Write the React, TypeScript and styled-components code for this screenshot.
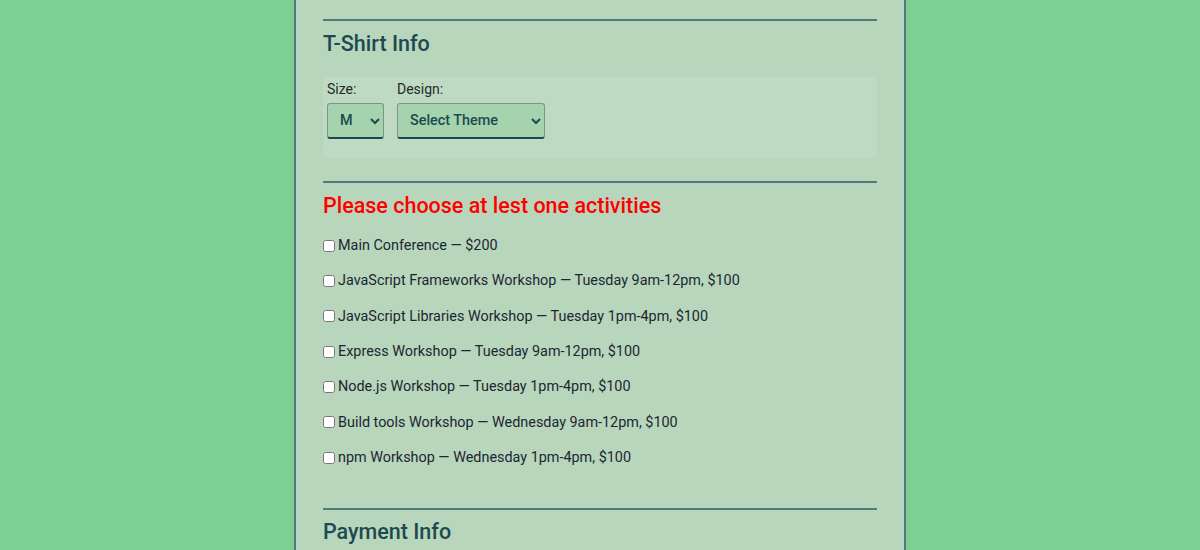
import styled, { createGlobalStyle } from 'styled-components';

const GlobalStyle = createGlobalStyle`
  html, body {
    margin: 0;
    padding: 0;
    background: #7ecf94;
    font-family: Roboto, "Liberation Sans", Arial, sans-serif;
  }
`;

const activities = [
  'Main Conference — $200',
  'JavaScript Frameworks Workshop — Tuesday 9am-12pm, $100',
  'JavaScript Libraries Workshop — Tuesday 1pm-4pm, $100',
  'Express Workshop — Tuesday 9am-12pm, $100',
  'Node.js Workshop — Tuesday 1pm-4pm, $100',
  'Build tools Workshop — Wednesday 9am-12pm, $100',
  'npm Workshop — Wednesday 1pm-4pm, $100',
];

const App = () => {
  return (
    <>
      <GlobalStyle />
      <Page>
        <Form>
          <Section>
            <Title>T-Shirt Info</Title>
            <ShirtBox>
              <Field>
                <Label htmlFor="size">Size:</Label>
                <Select id="size" width={57} defaultValue="M">
                  <option>S</option>
                  <option>M</option>
                  <option>L</option>
                  <option>XL</option>
                </Select>
              </Field>
              <Field>
                <Label htmlFor="design">Design:</Label>
                <Select id="design" width={148} defaultValue="Select Theme">
                  <option>Select Theme</option>
                  <option>JS Puns</option>
                  <option>I ♥ JS</option>
                </Select>
              </Field>
            </ShirtBox>
          </Section>

          <Section>
            <Title error>Please choose at lest one activities</Title>
            <ActivityList>
              {activities.map((a) => (
                <Activity key={a}>
                  <Check type="checkbox" />
                  {a}
                </Activity>
              ))}
            </ActivityList>
          </Section>

          <Section>
            <Title>Payment Info</Title>
          </Section>
        </Form>
      </Page>
    </>
  );
};

export default App;

const Page = styled.div`
  height: 550px;
  overflow: hidden;
  display: flex;
  justify-content: center;
`;

const Form = styled.form`
  width: 612px;
  box-sizing: border-box;
  background: #b8d6bc;
  border-left: 2px solid #4f7b7d;
  border-right: 2px solid #4f7b7d;
  padding: 19px 27px 0;
`;

const Section = styled.section`
  border-top: 2px solid #4f7b7d;
  padding-bottom: 23px;

  & + & {
    padding-bottom: 0;
  }
`;

const Title = styled.h2<{ error?: boolean }>`
  margin: 9.5px 0 0;
  font-size: 21.5px;
  font-weight: 500;
  line-height: 26px;
  color: ${({ error }) => (error ? '#ff0000' : '#1d4a50')};
`;

const ShirtBox = styled.div`
  margin-top: 20.5px;
  background: #bfdac3;
  border-radius: 3px;
  padding: 4px 4px 19px;
  display: flex;
  gap: 13px;
`;

const Field = styled.div`
  display: flex;
  flex-direction: column;
  align-items: flex-start;
`;

const Label = styled.label`
  font-size: 14px;
  line-height: 16px;
  color: #1f2a2c;
  margin-bottom: 6px;
`;

const Select = styled.select<{ width: number }>`
  width: ${({ width }) => width}px;
  height: 36px;
  box-sizing: border-box;
  background-color: #a4d3ae;
  border: 1px solid #7f9489;
  border-bottom: 2px solid #1d4a50;
  border-radius: 3px;
  padding: 0 4px 0 8px;
  font-family: Roboto, "Liberation Sans", Arial, sans-serif;
  font-size: 14.4px;
  font-weight: 500;
  color: #1d4a50;
`;

const ActivityList = styled.div`
  margin-top: 9.5px;
  margin-bottom: 32.5px;
  display: flex;
  flex-direction: column;
`;

const Activity = styled.label`
  display: flex;
  align-items: center;
  height: 35.33px;
  font-size: 14.4px;
  color: #1c2633;
`;

const Check = styled.input`
  width: 12px;
  height: 12px;
  margin: 0 3px 0 0;
`;
